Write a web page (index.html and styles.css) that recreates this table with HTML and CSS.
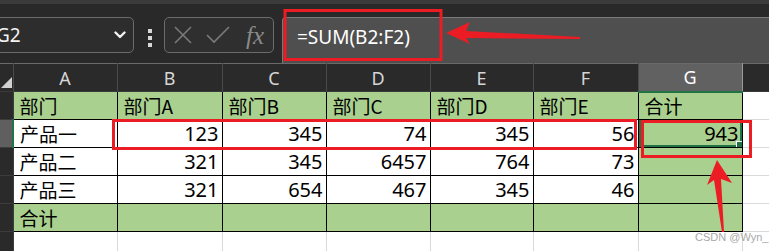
FILE: index.html
```html
<!DOCTYPE html>
<html lang="zh">
<head>
<meta charset="utf-8">
<link rel="stylesheet" href="styles.css">
</head>
<body>
<div class="app">
  <div class="topstrip"></div>
  <div class="toolbar">
    <div class="namebox">
      <span class="name">G2</span>
      <svg class="chev" width="12" height="8" viewBox="0 0 12 8"><path d="M1.5 1.5 L6 6 L10.5 1.5" fill="none" stroke="#f2f2f2" stroke-width="2.4" stroke-linecap="round" stroke-linejoin="round"/></svg>
    </div>
    <div class="dots"><i></i><i></i><i></i></div>
    <div class="fxbox">
      <svg width="20" height="20" viewBox="0 0 20 20"><path d="M2 2 L18 18 M18 2 L2 18" stroke="#7a7a7a" stroke-width="1.6" fill="none"/></svg>
      <svg width="26" height="20" viewBox="0 0 26 20"><path d="M2 10 L9 17 L24 2" stroke="#7a7a7a" stroke-width="1.6" fill="none"/></svg>
      <span class="fx">fx</span>
    </div>
    <div class="formula">=SUM(B2:F2)</div>
  </div>
  <table class="sheet">
    <colgroup>
      <col class="c-rh"><col class="c-a"><col class="c-b"><col class="c-c"><col class="c-d"><col class="c-e"><col class="c-f"><col class="c-g"><col class="c-x">
    </colgroup>
    <tr class="hdr">
      <th class="corner"><span class="tri"></span></th>
      <th>A</th><th>B</th><th>C</th><th>D</th><th>E</th><th>F</th><th class="sel">G</th><th class="blank"></th>
    </tr>
    <tr>
      <th class="rh"></th>
      <td class="g">部门</td><td class="g">部门A</td><td class="g">部门B</td><td class="g">部门C</td><td class="g">部门D</td><td class="g">部门E</td><td class="g">合计</td><td class="e"></td>
    </tr>
    <tr>
      <th class="rh rsel"></th>
      <td class="w">产品一</td><td class="w n">123</td><td class="w n">345</td><td class="w n">74</td><td class="w n">345</td><td class="w n">56</td><td class="g n active">943<span class="handle"></span></td><td class="e"></td>
    </tr>
    <tr>
      <th class="rh"></th>
      <td class="w">产品二</td><td class="w n">321</td><td class="w n">345</td><td class="w n">6457</td><td class="w n">764</td><td class="w n">73</td><td class="g"></td><td class="e"></td>
    </tr>
    <tr>
      <th class="rh"></th>
      <td class="w">产品三</td><td class="w n">321</td><td class="w n">654</td><td class="w n">467</td><td class="w n">345</td><td class="w n">46</td><td class="g"></td><td class="e"></td>
    </tr>
    <tr>
      <th class="rh"></th>
      <td class="g">合计</td><td class="g"></td><td class="g"></td><td class="g"></td><td class="g"></td><td class="g"></td><td class="g"></td><td class="e"></td>
    </tr>
    <tr class="last">
      <th class="rh"></th>
      <td class="e"></td><td class="e"></td><td class="e"></td><td class="e"></td><td class="e"></td><td class="e"></td><td class="e"></td><td class="e"></td>
    </tr>
  </table>
  <span class="watermark">CSDN @Wyn_</span>
  <svg class="annot" width="769" height="251" viewBox="0 0 769 251">
    <rect x="285" y="10.5" width="156" height="49" fill="none" stroke="#ec1c24" stroke-width="3"/>
    <rect x="113.5" y="120.5" width="522" height="28" fill="none" stroke="#ec1c24" stroke-width="3"/>
    <rect x="642.5" y="121.5" width="108" height="35" fill="none" stroke="#ec1c24" stroke-width="3"/>
    <polygon points="446,33 470,22 466,31 580,37 580,39 466,38 470,44" fill="#ec1c24"/>
    <polygon points="717,160 732,183 721,179 724,232 722,232 714,180 707,185" fill="#ec1c24"/>
  </svg>
</div>
</body>
</html>
```

FILE: styles.css
```css
html, body {
  margin: 0;
  padding: 0;
  background: #ffffff;
  overflow: hidden;
}
.app {
  position: relative;
  width: 769px;
  height: 251px;
  overflow: hidden;
  font-family: "Noto Sans", "Noto Sans CJK SC", sans-serif;
}
.topstrip {
  height: 4px;
  background: #3b3b3b;
}
.toolbar {
  height: 59px;
  background: #292929;
  display: flex;
  align-items: flex-start;
  box-sizing: border-box;
  padding-top: 13px;
}
.namebox {
  margin-left: -10px;
  width: 144px;
  height: 36px;
  box-sizing: border-box;
  border: 1px solid #6b6b6b;
  border-radius: 5px;
  background: #2d2d2d;
  display: flex;
  align-items: center;
  justify-content: space-between;
  padding: 0 7px 0 5px;
}
.name {
  color: #f4f4f4;
  font-family: "Noto Sans", sans-serif;
  font-size: 19px;
  line-height: 1;
}
.chev {
  display: block;
}
.dots {
  width: 4px;
  margin: 12px 12px 0 14px;
  display: flex;
  flex-direction: column;
  gap: 3px;
}
.dots i {
  display: block;
  width: 4px;
  height: 4px;
  background: #d8d8d8;
}
.fxbox {
  width: 110px;
  height: 36px;
  box-sizing: border-box;
  border: 1px solid #6b6b6b;
  border-radius: 5px;
  background: #2f2f2f;
  display: flex;
  align-items: center;
  padding-left: 8px;
  gap: 12px;
}
.fxbox svg {
  display: block;
}
.fx {
  color: #8a8a8a;
  font-family: "Liberation Serif", serif;
  font-style: italic;
  font-size: 25px;
  line-height: 1;
  margin-left: 3px;
}
.formula {
  margin-left: 8px;
  flex: 1;
  height: 46px;
  box-sizing: border-box;
  border-top: 1px solid #7a7a7a;
  border-left: 1px solid #7a7a7a;
  border-top-left-radius: 4px;
  background: #4f4f4f;
  color: #ffffff;
  font-family: "Noto Sans", sans-serif;
  font-size: 19px;
  line-height: 1;
  padding: 10px 0 0 14px;
}
.sheet {
  border-collapse: collapse;
  table-layout: fixed;
  width: 800px;
}
.c-rh { width: 13px; }
.c-a { width: 104px; }
.c-b { width: 105px; }
.c-c { width: 104px; }
.c-d { width: 104px; }
.c-e { width: 103px; }
.c-f { width: 105px; }
.c-g { width: 104px; }
.c-x { width: 58px; }
.sheet th, .sheet td {
  padding: 0;
  height: 28px;
  box-sizing: border-box;
  white-space: nowrap;
  overflow: hidden;
}
.hdr th {
  background: #2a2a2a;
  color: #d6d6d6;
  font-family: "Noto Sans", sans-serif;
  font-weight: normal;
  font-size: 18px;
  text-align: center;
  border-right: 1px solid #4a4a4a;
  border-top: 1px solid #6a6a6a;
  border-bottom: 1px solid #3a3a3a;
}
.hdr th.sel {
  background: #616161;
  color: #ffffff;
  border-bottom: 2px solid #217346;
  border-right: 1px solid #9a9a9a;
  border-left: 1px solid #9a9a9a;
}
.hdr th.blank {
  border-right: none;
}
.corner {
  position: relative;
}
.tri {
  position: absolute;
  right: 1px;
  bottom: 3px;
  width: 0;
  height: 0;
  border-left: 11px solid transparent;
  border-bottom: 11px solid #d0d0d0;
}
.rh {
  background: #2a2a2a;
  border-bottom: 1px solid #3c3c3c;
  border-right: 1px solid #3c3c3c;
}
.rh.rsel {
  background: #5f5f5f;
  border-right: 2px solid #217346;
}
.sheet td {
  font-family: "Noto Sans CJK SC", "Noto Sans", sans-serif;
  font-size: 19px;
  color: #000000;
  line-height: 1;
  padding: 0 6px 0 6px;
  vertical-align: middle;
}
.sheet td.n {
  text-align: right;
  font-family: "Noto Sans", sans-serif;
  font-size: 20px;
  padding-right: 3px;
}
.g {
  background: #a9d08e;
  border: 1px solid #000000;
}
.w {
  background: #ffffff;
  border: 1px solid #000000;
}
.e {
  background: #ffffff;
  border-right: 1px solid #dadada;
  border-bottom: 1px solid #dadada;
}
.active {
  position: relative;
  box-shadow: inset 0 0 0 2px #217346;
}
.handle {
  position: absolute;
  right: -1px;
  bottom: -1px;
  width: 5px;
  height: 5px;
  background: #217346;
  border: 1px solid #ffffff;
}
.watermark {
  position: absolute;
  left: 695px;
  top: 231px;
  font-family: "Liberation Sans", sans-serif;
  font-size: 11px;
  color: #a8a8a8;
}
.annot {
  position: absolute;
  left: 0;
  top: 0;
  pointer-events: none;
}
```
